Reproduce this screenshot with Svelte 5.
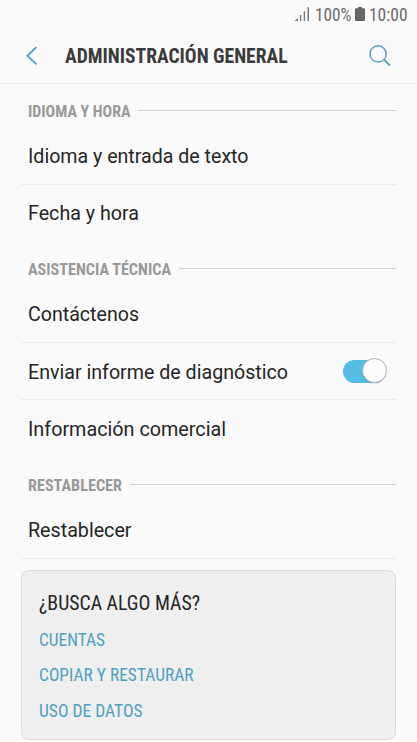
<script>
  const sections = [
    {
      title: 'IDIOMA Y HORA', width: 102.5,
      rows: [
        { text: 'Idioma y entrada de texto', width: 220.5, height: 58, base: 36 },
        { text: 'Fecha y hora', width: 111, height: 57, base: 35.4, last: true }
      ]
    },
    {
      title: 'ASISTENCIA TÉCNICA', width: 143,
      rows: [
        { text: 'Contáctenos', width: 111, height: 58, base: 36.4 },
        { text: 'Enviar informe de diagnóstico', width: 260, height: 57, base: 35.5, toggle: true },
        { text: 'Información comercial', width: 198, height: 58, base: 36, last: true }
      ]
    },
    {
      title: 'RESTABLECER', width: 94,
      rows: [{ text: 'Restablecer', width: 103.5, height: 58, base: 36 }]
    }
  ];
  const links = [
    { text: 'CUENTAS', width: 66 },
    { text: 'COPIAR Y RESTAURAR', width: 154.5 },
    { text: 'USO DE DATOS', width: 103.5 }
  ];
</script>

{#snippet label(text, width, height, base, kind)}
  <svg class="label {kind}" {width} {height}>
    <text x="0" y={base} textLength={width} lengthAdjust="spacingAndGlyphs">{text}</text>
  </svg>
{/snippet}

<main>
  <div class="status">
    <svg class="signal" width="15" height="14" viewBox="0 0 15 14" fill="#777">
      <path d="M0 14V13.4L3 11V14ZM4.9 8H6.3V14H4.9ZM8.7 4.2H10.1V14H8.7ZM12.5 .3H14V14H12.5Z" />
    </svg>
    {@render label('100%', 36.5, 28, 20.5, 'clock')}
    <svg class="battery" width="10" height="14" viewBox="0 0 10 14" fill="#666">
      <path d="M3 0H7V1.2H9Q10 1.2 10 2.2V13Q10 14 9 14H1Q0 14 0 13V2.2Q0 1.2 1 1.2H3Z" />
    </svg>
    {@render label('10:00', 38.5, 28, 20.5, 'clock')}
  </div>

  <header>
    <svg class="back" width="12" height="20" viewBox="0 0 12 20" fill="none" stroke="#519fc3" stroke-width="1.8">
      <path d="M10.4 1.2L1.4 9.8L10.4 18.4" />
    </svg>
    <h1>{@render label('ADMINISTRACIÓN GENERAL', 222.5, 55, 35.2, 'title')}</h1>
    <svg class="search" width="22" height="22" viewBox="0 0 22 22" fill="none" stroke="#519fc3">
      <circle cx="9.1" cy="8.9" r="8.1" stroke-width="1.4" />
      <path d="M14.9 14.7L20.9 20.5" stroke-width="1.8" />
    </svg>
  </header>

  {#each sections as section}
    <section>
      <h2>{@render label(section.title, section.width, 43, 33.4, 'section')}<span class="rule"></span></h2>
      {#each section.rows as row}
        <div class="row" class:last={row.last} style:height="{row.height}px">
          {@render label(row.text, row.width, row.height - 1, row.base, 'item')}
          {#if row.toggle}
            <span class="toggle"><span class="knob"></span></span>
          {/if}
        </div>
      {/each}
    </section>
  {/each}

  <aside>
    <h3>{@render label('¿BUSCA ALGO MÁS?', 161, 50, 38.7, 'question')}</h3>
    {#each links as link}
      <div class="link">{@render label(link.text, link.width, 35.33, 25, 'anchor')}</div>
    {/each}
  </aside>
</main>

<style>
  :global(body) { background: #fafafa; }
  main {
    width: 417px;
    height: 742px;
    overflow: hidden;
    box-sizing: border-box;
    background: #fafafa;
    font-family: Roboto, sans-serif;
  }
  h1, h2, h3 { margin: 0; font: inherit; }
  .label { display: block; flex: none; overflow: visible; }
  .clock, .title, .section, .question, .anchor {
    font-family: "Roboto Condensed", Roboto, sans-serif;
    font-stretch: 75%;
  }
  .clock { font-size: 18px; fill: #6c6c6c; }
  .title { font-size: 19.5px; font-weight: 700; fill: #3b3b3b; }
  .section { font-size: 16.3px; font-weight: 700; fill: #999; }
  .item { font-size: 20px; fill: #252525; }
  .question { font-size: 20px; fill: #252525; }
  .anchor { font-size: 17.8px; fill: #519fbf; }

  .status { display: flex; height: 28px; padding-left: 295px; }
  .signal { margin: 7px 4.5px 0 0; flex: none; }
  .battery { margin: 7px 4px 0 4px; flex: none; }

  header {
    display: flex;
    align-items: flex-start;
    height: 55px;
    padding: 0 26px;
    border-bottom: 1px solid #ececec;
  }
  .back { margin: 18px 27px 0 0; }
  .search { margin: 17px 0 0 auto; }

  h2 { display: flex; height: 43px; padding: 0 21px 0 28px; }
  .rule { flex: 1; height: 1px; margin: 26px 0 0 7.5px; background: #d2d2d2; }
  .row {
    display: flex;
    justify-content: space-between;
    align-items: flex-start;
    box-sizing: border-box;
    margin: 0 21px;
    padding: 0 10px 0 7px;
    border-bottom: 1px solid #ececec;
  }
  .last { border-bottom-color: transparent; }
  .toggle {
    display: flex;
    justify-content: flex-end;
    width: 43px;
    height: 23px;
    margin-top: 17px;
    border-radius: 12px;
    background: #55bde3;
  }
  .knob {
    box-sizing: border-box;
    width: 25px;
    height: 25px;
    margin: -2px -.5px 0 0;
    border: 1px solid #b5b5b5;
    border-radius: 50%;
    background: #fcfcfc;
    box-shadow: 0 .5px 1px #0003;
  }
  aside {
    box-sizing: border-box;
    width: 375px;
    height: 170px;
    margin: 11px 21px 0;
    padding-left: 17.4px;
    border: 1px solid #dcdcdc;
    border-radius: 8px;
    background: #efefef;
  }
  h3 { height: 50px; }
  .link { height: 35.33px; }
</style>
